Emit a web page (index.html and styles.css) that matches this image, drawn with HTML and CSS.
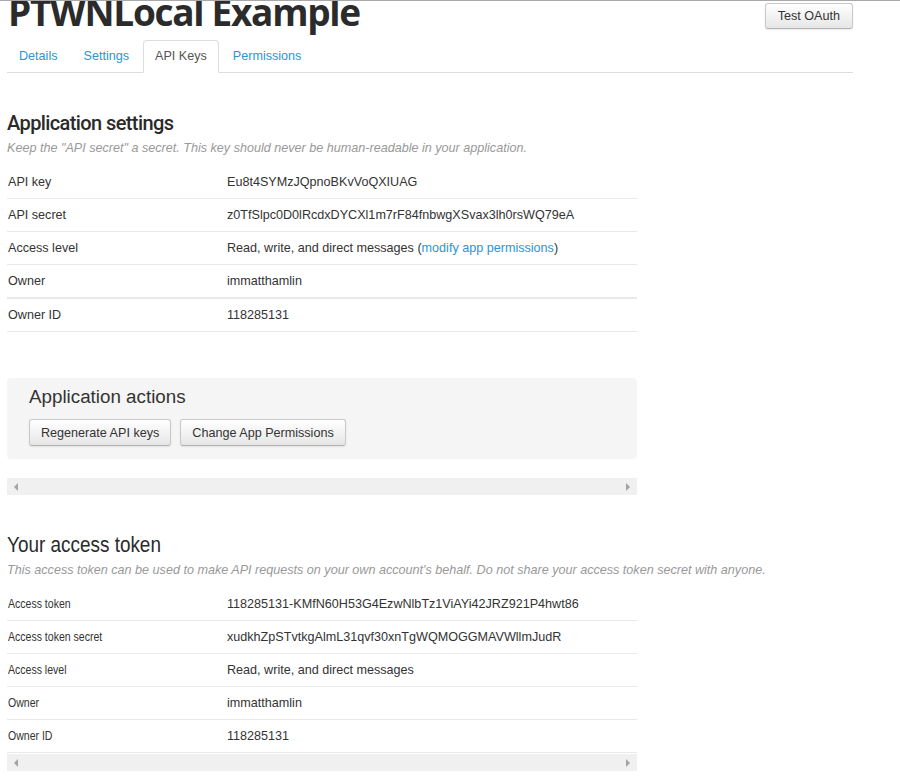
FILE: index.html
```html
<!DOCTYPE html>
<html>
<head>
<meta charset="utf-8">
<link rel="stylesheet" href="styles.css">
</head>
<body>
<div class="page">
  <div class="header">
    <h1 class="title">PTWNLocal Example</h1>
    <button class="btn btn-oauth">Test OAuth</button>
  </div>
  <ul class="tabs">
    <li class="tab"><a>Details</a></li>
    <li class="tab"><a>Settings</a></li>
    <li class="tab active"><a>API Keys</a></li>
    <li class="tab"><a>Permissions</a></li>
  </ul>

  <div class="section section-settings">
    <h2 class="sec-title">Application settings</h2>
    <p class="sec-sub">Keep the "API secret" a secret. This key should never be human-readable in your application.</p>
    <div class="kv">
      <div class="row"><div class="k">API key</div><div class="v">Eu8t4SYMzJQpnoBKvVoQXIUAG</div></div>
      <div class="row"><div class="k">API secret</div><div class="v">z0TfSlpc0D0lRcdxDYCXl1m7rF84fnbwgXSvax3lh0rsWQ79eA</div></div>
      <div class="row"><div class="k">Access level</div><div class="v">Read, write, and direct messages (<a class="link">modify app permissions</a>)</div></div>
      <div class="row row-thick"><div class="k">Owner</div><div class="v">immatthamlin</div></div>
      <div class="row"><div class="k">Owner ID</div><div class="v">118285131</div></div>
    </div>
  </div>

  <div class="actions">
    <h3 class="actions-title">Application actions</h3>
    <div class="actions-btns">
      <button class="btn btn-action">Regenerate API keys</button>
      <button class="btn btn-action">Change App Permissions</button>
    </div>
  </div>

  <div class="hscroll">
    <span class="arrow arrow-left"></span>
    <span class="arrow arrow-right"></span>
  </div>

  <div class="section section-token">
    <h2 class="sec-title sec-title-b"><span class="narrow">Your access token</span></h2>
    <p class="sec-sub sec-sub-b">This access token can be used to make API requests on your own account's behalf. Do not share your access token secret with anyone.</p>
    <div class="kv kv-b">
      <div class="row"><div class="k"><span class="narrow">Access token</span></div><div class="v">118285131-KMfN60H53G4EzwNlbTz1ViAYi42JRZ921P4hwt86</div></div>
      <div class="row"><div class="k"><span class="narrow">Access token secret</span></div><div class="v">xudkhZpSTvtkgAlmL31qvf30xnTgWQMOGGMAVWllmJudR</div></div>
      <div class="row"><div class="k"><span class="narrow">Access level</span></div><div class="v">Read, write, and direct messages</div></div>
      <div class="row"><div class="k"><span class="narrow">Owner</span></div><div class="v">immatthamlin</div></div>
      <div class="row"><div class="k"><span class="narrow">Owner ID</span></div><div class="v">118285131</div></div>
    </div>
  </div>

  <div class="hscroll hscroll-b">
    <span class="arrow arrow-left"></span>
    <span class="arrow arrow-right"></span>
  </div>
</div>
</body>
</html>
```

FILE: styles.css
```css
* { box-sizing: border-box; }
html, body { margin: 0; padding: 0; background: #fff; }
body {
  font-family: "Liberation Sans", Arial, sans-serif;
  font-size: 12.6px;
  color: #333;
  border-top: 1px solid #a8a8a8;
  overflow: hidden;
  height: 776px;
}
.page {
  width: 853px;
  padding-left: 7px;
}
.header {
  display: flex;
  justify-content: space-between;
  align-items: flex-start;
  height: 39px;
}
.title {
  margin: -11px 0 0 1px;
  font-family: "Open Sans", "Liberation Sans", sans-serif;
  font-weight: 700;
  font-size: 37px;
  line-height: 44px;
  letter-spacing: -1.3px;
  color: #2b2b2b;
  white-space: nowrap;
}
.btn {
  font-family: "Liberation Sans", Arial, sans-serif;
  font-size: 12.6px;
  color: #333;
  background: linear-gradient(#ffffff, #e6e6e6);
  border: 1px solid #c8c8c8;
  border-bottom-color: #b3b3b3;
  border-radius: 3px;
  box-shadow: 0 1px 2px rgba(0,0,0,0.08);
  padding: 0 11px;
  white-space: nowrap;
  cursor: pointer;
}
.btn-oauth {
  margin-top: 2px;
  height: 26px;
  padding: 0 12px;
}
.tabs {
  list-style: none;
  margin: 0;
  padding: 0;
  display: flex;
  border-bottom: 1px solid #ddd;
  height: 33px;
}
.tab {
  margin-right: 2px;
  margin-bottom: -1px;
  border: 1px solid transparent;
  border-radius: 4px 4px 0 0;
  padding: 7px 11px;
  line-height: 16px;
  height: 33px;
}
.tab a { color: #2b95d4; }
.tab.active {
  border-color: #ddd;
  border-bottom-color: #fff;
  background: #fff;
}
.tab.active a { color: #555; }

.section-settings { margin-top: 38px; }
.sec-title {
  margin: 0;
  font-family: Roboto, "Liberation Sans", sans-serif;
  font-weight: 500;
  font-size: 20px;
  line-height: 24px;
  letter-spacing: -0.6px;
  color: #2a2a2a;
}
.sec-sub {
  margin: 5px 0 10px;
  font-style: italic;
  font-size: 12.6px;
  line-height: 16px;
  color: #999;
}
.kv { width: 630px; }
.row {
  display: flex;
  border-bottom: 1px solid #e9e9e9;
  padding: 8px 0;
  line-height: 16px;
}
.row-thick { border-bottom: 2px solid #e9e9e9; }
.k { width: 220px; padding-left: 1px; }
.v { flex: 1; }
.link { color: #2b95d4; }

.actions {
  margin-top: 46px;
  width: 630px;
  background: #f5f5f5;
  border-radius: 4px;
  padding: 8px 22px 13px;
}
.actions-title {
  margin: 0;
  font-weight: 400;
  font-size: 18.8px;
  line-height: 22px;
  color: #333;
}
.actions-btns {
  display: flex;
  gap: 9px;
  margin-top: 11px;
}
.btn-action { height: 27px; }

.hscroll {
  margin-top: 19px;
  width: 630px;
  height: 17px;
  background: #f0f0f0;
  display: flex;
  justify-content: space-between;
  align-items: center;
  padding: 0 7px;
}
.arrow {
  width: 0;
  height: 0;
  border-top: 4px solid transparent;
  border-bottom: 4px solid transparent;
}
.arrow-left { border-right: 4px solid #a3a3a3; }
.arrow-right { border-left: 4px solid #a3a3a3; }

.section-token { margin-top: 37px; }
.narrow {
  display: inline-block;
  transform-origin: left center;
  white-space: nowrap;
}
.sec-title-b {
  font-family: "Liberation Sans", sans-serif;
  font-weight: 400;
  font-size: 22px;
  line-height: 26px;
  letter-spacing: 0;
}
.sec-title-b .narrow { transform: scaleX(0.86); }
.sec-sub-b { margin-top: 4px; }
.kv-b .k .narrow {
  font-size: 13.5px;
  transform: scaleX(0.78);
}
.hscroll-b { margin-top: 1px; }
```
